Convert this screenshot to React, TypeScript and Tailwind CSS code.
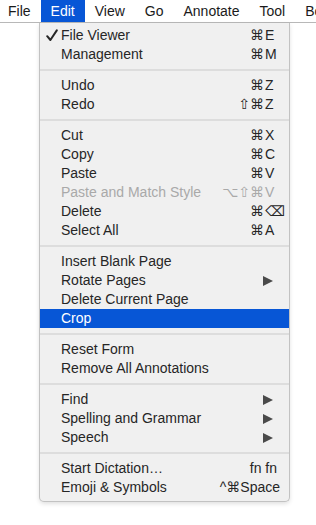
import React from 'react';

type Item =
  | { sep: true }
  | {
      sep?: false;
      label: string;
      mods?: string;
      keyChar?: string;
      raw?: string;
      checked?: boolean;
      disabled?: boolean;
      submenu?: boolean;
      active?: boolean;
    };

const items: Item[] = [
  { label: 'File Viewer', mods: '⌘', keyChar: 'E', checked: true },
  { label: 'Management', mods: '⌘', keyChar: 'M' },
  { sep: true },
  { label: 'Undo', mods: '⌘', keyChar: 'Z' },
  { label: 'Redo', mods: '⇧⌘', keyChar: 'Z' },
  { sep: true },
  { label: 'Cut', mods: '⌘', keyChar: 'X' },
  { label: 'Copy', mods: '⌘', keyChar: 'C' },
  { label: 'Paste', mods: '⌘', keyChar: 'V' },
  { label: 'Paste and Match Style', mods: '⌥⇧⌘', keyChar: 'V', disabled: true },
  { label: 'Delete', mods: '⌘', keyChar: '⌫' },
  { label: 'Select All', mods: '⌘', keyChar: 'A' },
  { sep: true },
  { label: 'Insert Blank Page' },
  { label: 'Rotate Pages', submenu: true },
  { label: 'Delete Current Page' },
  { label: 'Crop', active: true },
  { sep: true },
  { label: 'Reset Form' },
  { label: 'Remove All Annotations' },
  { sep: true },
  { label: 'Find', submenu: true },
  { label: 'Spelling and Grammar', submenu: true },
  { label: 'Speech', submenu: true },
  { sep: true },
  { label: 'Start Dictation…', raw: 'fn fn' },
  { label: 'Emoji & Symbols', raw: '^⌘Space' },
];

const menus = ['File', 'Edit', 'View', 'Go', 'Annotate', 'Tool', 'Bookmarks'];

const Check = () => (
  <svg width="12" height="13" viewBox="0 0 12 13" className="ml-[6px]">
    <path d="M1.2 7.2 L4.4 11 L10.8 1.4" fill="none" stroke="#262626" strokeWidth="2" strokeLinecap="round" strokeLinejoin="round" />
  </svg>
);

const Arrow = () => (
  <svg width="10" height="10" viewBox="0 0 10 10" className="mr-[16px]">
    <polygon points="0,0 10,5 0,10" fill="#4a4a4a" />
  </svg>
);

export default function App() {
  return (
    <div
      className="w-[316px] h-[525px] bg-white overflow-hidden text-[14px] text-[#222]"
      style={{ fontFamily: '"Liberation Sans", "DejaVu Sans", sans-serif' }}
    >
      {/* menu bar */}
      <div className="h-[23px] border-b border-[#b8b8b8] flex whitespace-nowrap overflow-hidden pl-[-2px]">
        <div className="flex -ml-[2px]">
          {menus.map((m) => (
            <div
              key={m}
              className={`h-[22px] leading-[22px] px-[10px] ${
                m === 'Edit' ? 'bg-[#0756d6] text-white' : 'text-[#1a1a1a]'
              }`}
            >
              {m}
            </div>
          ))}
        </div>
      </div>

      {/* dropdown */}
      <div className="ml-[39px] w-[251px] bg-[#f0f0f0] border border-t-0 border-[#c2c2c2] rounded-b-[5px] pt-[3px] pb-[4px] shadow-[0_2px_4px_rgba(0,0,0,0.12)]">
        {items.map((it, i) =>
          it.sep ? (
            <div key={i} className="my-[5px] h-[2px] bg-[#dddddd]" />
          ) : (
            <div
              key={i}
              className={`flex items-center h-[19px] leading-[19px] whitespace-nowrap ${
                it.active ? 'bg-[#0756d6] text-white' : it.disabled ? 'text-[#a9a9a9]' : 'text-[#262626]'
              }`}
            >
              <div className="w-[21px] flex items-center">{it.checked && <Check />}</div>
              <div className="flex-1">{it.label}</div>
              {it.keyChar && (
                <div className="flex pr-[12px]">
                  <span>{it.mods}</span>
                  <span className="w-[12px] ml-[1px]">{it.keyChar}</span>
                </div>
              )}
              {it.raw && (
                <div className={it.raw === 'fn fn' ? 'pr-[12px]' : 'pr-[9px]'}>{it.raw}</div>
              )}
              {it.submenu && <Arrow />}
            </div>
          )
        )}
      </div>
    </div>
  );
}
